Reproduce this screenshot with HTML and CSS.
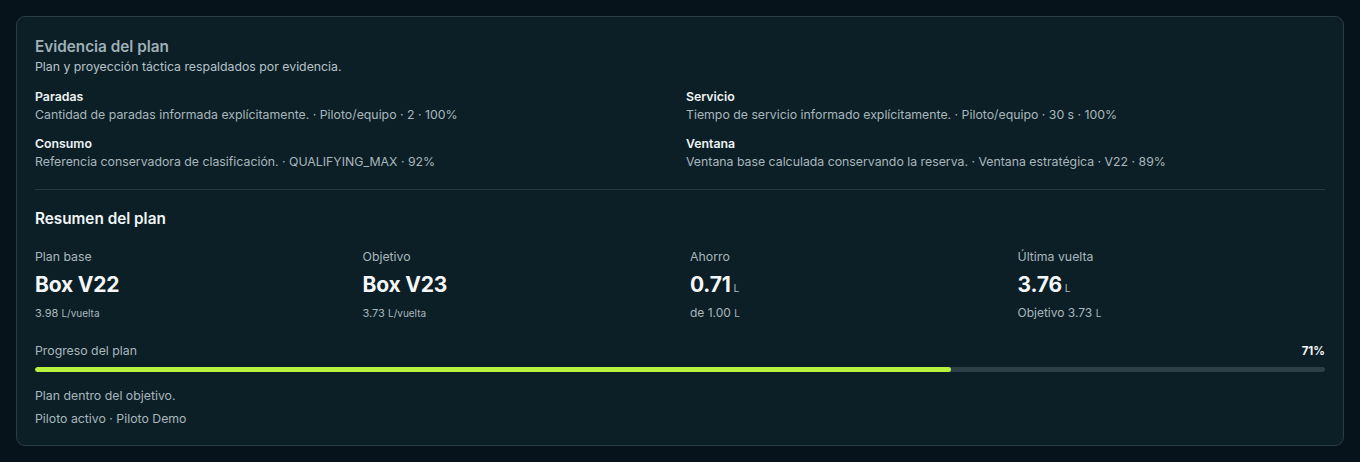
FILE: index.html
```html
<!DOCTYPE html>
<html lang="es">
<head>
<meta charset="utf-8">
<title>Evidencia del plan</title>
<link rel="stylesheet" href="styles.css">
</head>
<body>
<section class="card">
  <header class="head">
    <h2 class="title">Evidencia del plan</h2>
    <p class="subtitle">Plan y proyección táctica respaldados por evidencia.</p>
  </header>
  <div class="evidence">
    <div class="ev">
      <div class="ev-label">Paradas</div>
      <div class="ev-desc">Cantidad de paradas informada explícitamente. · Piloto/equipo · 2 · 100%</div>
    </div>
    <div class="ev">
      <div class="ev-label">Servicio</div>
      <div class="ev-desc">Tiempo de servicio informado explícitamente. · Piloto/equipo · 30 s · 100%</div>
    </div>
    <div class="ev">
      <div class="ev-label">Consumo</div>
      <div class="ev-desc">Referencia conservadora de clasificación. · QUALIFYING_MAX · 92%</div>
    </div>
    <div class="ev">
      <div class="ev-label">Ventana</div>
      <div class="ev-desc">Ventana base calculada conservando la reserva. · Ventana estratégica · V22 · 89%</div>
    </div>
  </div>
  <hr class="divider">
  <h3 class="section-title">Resumen del plan</h3>
  <div class="stats">
    <div class="stat">
      <div class="stat-label">Plan base</div>
      <div class="stat-value">Box V22</div>
      <div class="stat-sub">3.98 <span class="unit">L/vuelta</span></div>
    </div>
    <div class="stat">
      <div class="stat-label">Objetivo</div>
      <div class="stat-value">Box V23</div>
      <div class="stat-sub">3.73 <span class="unit">L/vuelta</span></div>
    </div>
    <div class="stat">
      <div class="stat-label">Ahorro</div>
      <div class="stat-value">0.71<span class="vunit">L</span></div>
      <div class="stat-sub loose">de 1.00 <span class="unit">L</span></div>
    </div>
    <div class="stat">
      <div class="stat-label">Última vuelta</div>
      <div class="stat-value">3.76<span class="vunit">L</span></div>
      <div class="stat-sub loose">Objetivo 3.73 <span class="unit">L</span></div>
    </div>
  </div>
  <div class="progress-head">
    <span class="progress-label">Progreso del plan</span>
    <span class="progress-pct">71%</span>
  </div>
  <div class="track"><div class="fill" style="width:71%"></div></div>
  <p class="note">Plan dentro del objetivo.</p>
  <p class="note">Piloto activo · Piloto Demo</p>
</section>
</body>
</html>
```

FILE: styles.css
```css
* { box-sizing: border-box; }
html, body { margin: 0; padding: 0; }
body {
  background: #06131a;
  font-family: "Inter", "Noto Sans", sans-serif;
  color: #aebbc0;
  padding: 16px 16px 0 16px;
  height: 462px;
  overflow: hidden;
}
.card {
  background: #0c1f27;
  border: 1px solid #2b3d44;
  border-radius: 9px;
  padding: 19px 18px 18px 18px;
  height: 430px;
  width: 1328px;
}
.title {
  margin: 0;
  font-size: 15.3px;
  font-weight: 600;
  color: #9fb0b6;
  line-height: 21px;
}
.subtitle {
  margin: 1px 0 0 0;
  font-size: 12.3px;
  line-height: 17px;
  color: #b6c3c7;
}
.evidence {
  display: grid;
  grid-template-columns: 1fr 1fr;
  column-gap: 12px;
  row-gap: 11px;
  margin-top: 13px;
}
.ev-label {
  font-size: 12.3px;
  font-weight: 600;
  color: #eef3f4;
  line-height: 18px;
}
.ev-desc {
  font-size: 12.3px;
  line-height: 18px;
  color: #a9b7bc;
}
.divider {
  border: 0;
  border-top: 1px solid #253840;
  margin: 18px 0 0 0;
}
.section-title {
  margin: 19px 0 0 0;
  font-size: 15.3px;
  font-weight: 600;
  color: #f1f5f6;
  line-height: 20px;
}
.stats {
  display: grid;
  grid-template-columns: repeat(4, 1fr);
  column-gap: 20px;
  margin-top: 20px;
}
.stat-label {
  font-size: 12.3px;
  line-height: 16px;
  color: #a9b7bc;
}
.stat-value {
  font-size: 21px;
  font-weight: 700;
  color: #f4f7f8;
  line-height: 26px;
  height: 26px;
  margin-top: 7px;
  letter-spacing: -0.2px;
}
.vunit {
  font-size: 10.5px;
  font-weight: 400;
  line-height: 1;
  color: #a9b7bc;
  margin-left: 3px;
  letter-spacing: 0;
}
.stat-sub {
  font-size: 11px;
  line-height: 16px;
  height: 16px;
  margin-top: 7px;
  color: #a9b7bc;
}
.stat-sub.loose { font-size: 12px; }
.unit { font-size: 10px; line-height: 1; }
.progress-head {
  display: flex;
  justify-content: space-between;
  align-items: baseline;
  margin-top: 22px;
}
.progress-label {
  font-size: 12.3px;
  line-height: 16px;
  color: #a9b7bc;
}
.progress-pct {
  font-size: 11.5px;
  font-weight: 700;
  color: #f4f7f8;
}
.track {
  margin-top: 8px;
  height: 5px;
  background: #2c4047;
  border-radius: 3px;
  overflow: hidden;
}
.fill {
  height: 100%;
  background: #b6f23e;
  border-radius: 3px;
}
.note {
  margin: 0;
  font-size: 12.3px;
  line-height: 16px;
  color: #a9b7bc;
}
.track + .note { margin-top: 16px; }
.note + .note { margin-top: 7px; }
```
